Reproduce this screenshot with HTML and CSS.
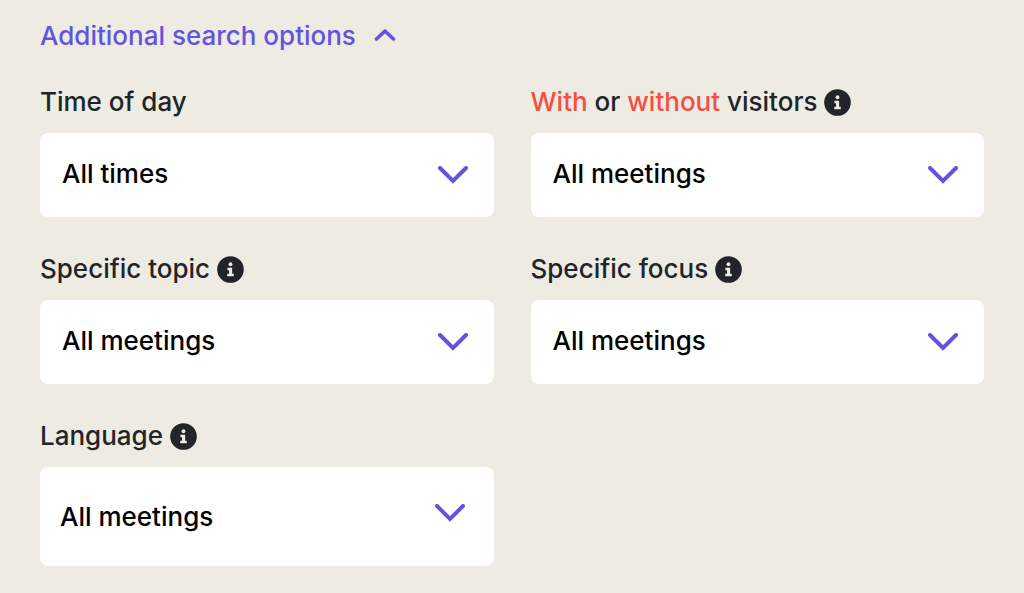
FILE: index.html
```html
<!DOCTYPE html>
<html lang="en">
<head>
    <meta charset="UTF-8">
    <meta name="viewport" content="width=device-width, initial-scale=1.0">
    <title>Meeting search</title>
    <link rel="stylesheet" href="styles.css">
</head>
<body>

<svg class="sprite" aria-hidden="true">
    <symbol id="chevron" viewBox="0 0 30 18">
        <path d="M2 2 L15 15 L28 2" fill="none" stroke="currentColor" stroke-width="4" stroke-linecap="round" stroke-linejoin="miter"/>
    </symbol>
    <symbol id="info-icon" viewBox="0 0 28 28">
        <circle cx="14" cy="14" r="13.8" fill="#212529"/>
        <circle cx="14" cy="8.6" r="2" fill="#edebe2"/>
        <path d="M10.8 12.1h4.9v6.2h1.7v2.6h-6.8v-2.6h1.9v-3.6h-1.7z" fill="#edebe2"/>
    </symbol>
</svg>

<form class="search-options">
    <button type="button" class="toggle" aria-expanded="true" aria-controls="options">
        Additional search options
        <svg class="toggle-icon" viewBox="0 0 22 14" aria-hidden="true">
            <path d="M2.5 11 L11 3 L19.5 11" fill="none" stroke="currentColor" stroke-width="3.6" stroke-linecap="round" stroke-linejoin="round"/>
        </svg>
    </button>

    <div class="options" id="options">
        <div class="field">
            <div class="field-label">
                <label for="time">Time of day</label>
            </div>
            <div class="select-wrap">
                <select id="time" name="time">
                    <option>All times</option>
                </select>
                <svg class="chevron"><use href="#chevron"/></svg>
            </div>
        </div>

        <div class="field">
            <div class="field-label">
                <label for="visitors"><span class="highlight">With</span> or <span class="highlight">without</span> visitors</label>
                <button type="button" class="info" aria-label="About visitors"><svg><use href="#info-icon"/></svg></button>
            </div>
            <div class="select-wrap">
                <select id="visitors" name="visitors">
                    <option>All meetings</option>
                </select>
                <svg class="chevron"><use href="#chevron"/></svg>
            </div>
        </div>

        <div class="field">
            <div class="field-label">
                <label for="topic">Specific topic</label>
                <button type="button" class="info" aria-label="About topics"><svg><use href="#info-icon"/></svg></button>
            </div>
            <div class="select-wrap">
                <select id="topic" name="topic">
                    <option>All meetings</option>
                </select>
                <svg class="chevron"><use href="#chevron"/></svg>
            </div>
        </div>

        <div class="field">
            <div class="field-label">
                <label for="focus">Specific focus</label>
                <button type="button" class="info" aria-label="About focus"><svg><use href="#info-icon"/></svg></button>
            </div>
            <div class="select-wrap">
                <select id="focus" name="focus">
                    <option>All meetings</option>
                </select>
                <svg class="chevron"><use href="#chevron"/></svg>
            </div>
        </div>

        <div class="field">
            <div class="field-label">
                <label for="language">Language</label>
                <button type="button" class="info" aria-label="About languages"><svg><use href="#info-icon"/></svg></button>
            </div>
            <div class="select-wrap select-tall">
                <select id="language" name="language">
                    <option>All meetings</option>
                </select>
                <svg class="chevron"><use href="#chevron"/></svg>
            </div>
        </div>
    </div>
</form>

</body>
</html>
```
FILE: styles.css
```css
* {
    box-sizing: border-box;
}
body {
    margin: 0;
    background-color: #edebe2;
    color: #212529;
    font-family: Inter, "Liberation Sans", sans-serif;
    font-size: 26px;
    font-weight: 500;
    line-height: 36px;
}
.sprite {
    display: none;
}
.search-options {
    padding: 18px 40px 27px;
}
button,
select {
    margin: 0;
    border: none;
    font: inherit;
    cursor: pointer;
}
.toggle {
    display: flex;
    align-items: center;
    gap: 18px;
    padding: 0;
    background: none;
    color: #6254e0;
}
.toggle-icon {
    width: 22px;
    height: 14px;
    margin-bottom: 2px;
}
.options {
    display: grid;
    grid-template-columns: 1fr 1fr;
    gap: 34px 37px;
    margin-top: 30px;
}
.field-label {
    display: flex;
    align-items: center;
    gap: 7px;
    margin-bottom: 13px;
}
.highlight {
    color: #f44f43;
}
.info {
    display: flex;
    padding: 0;
    background: none;
}
.info svg {
    width: 27px;
    height: 27px;
}
.select-wrap {
    display: grid;
    align-items: center;
}
.select-wrap select,
.chevron {
    grid-area: 1 / 1;
}
.select-wrap select {
    appearance: none;
    width: 100%;
    padding: 23px 80px 25px 22px;
    border-radius: 8px;
    background-color: #fff;
    color: #000;
}
.chevron {
    justify-self: end;
    width: 30px;
    height: 18px;
    margin-right: 26px;
    color: #6254e0;
    pointer-events: none;
}
.select-tall select {
    padding: 32px 80px 31px 20px;
}
.select-tall .chevron {
    margin-right: 29px;
    margin-bottom: 7px;
}
```
